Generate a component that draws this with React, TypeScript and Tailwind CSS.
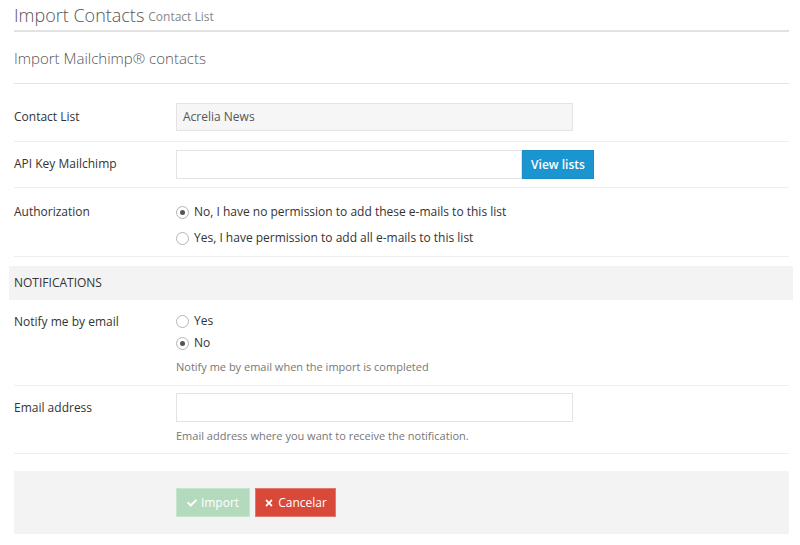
import React from "react";
import { FaCheck, FaTimes } from "react-icons/fa";

function Radio({ checked, label }: { checked?: boolean; label: string }) {
  return (
    <label className="flex h-[18px] items-center gap-[5px] leading-[18px]">
      <span className="flex h-[13px] w-[13px] items-center justify-center rounded-full border border-[#b5b5b5] bg-white">
        {checked && <span className="h-[5px] w-[5px] rounded-full bg-[#555]" />}
      </span>
      <span>{label}</span>
    </label>
  );
}

export default function App() {
  return (
    <div
      className="min-h-[545px] w-[800px] bg-white pl-[14px] pr-[11px] text-[12px] text-[#333]"
      style={{ fontFamily: '"Open Sans", "Liberation Sans", sans-serif' }}
    >
      <div className="flex h-[32px] items-end gap-[4px] border-b-2 border-[#e2e2e2] pb-[3px]">
        <span className="text-[18px] font-light leading-[24px] text-[#555]">Import Contacts</span>
        <span className="pb-[2px] text-[12px] leading-[16px] text-[#888]">Contact List</span>
      </div>
      <div className="flex h-[52px] items-center border-b border-[#e5e5e5] pt-[2px] text-[15px] font-light text-[#555]">
        Import Mailchimp® contacts
      </div>

      <div className="pt-[10px]">
        <div className="flex border-b border-[#eee] pb-[10px] pt-[9px]">
          <div className="w-[162px] pt-[5px] leading-[18px]">Contact List</div>
          <div className="flex h-[28px] w-[397px] items-center border border-[#e3e3e3] bg-[#f6f6f6] px-[6px] text-[#555]">
            Acrelia News
          </div>
        </div>

        <div className="flex border-b border-[#eee] pb-[8px] pt-[8px]">
          <div className="w-[162px] pt-[5px] leading-[18px]">API Key Mailchimp</div>
          <div className="flex">
            <div className="h-[29px] w-[346px] border border-[#e3e3e3] bg-white" />
            <button className="h-[29px] w-[72px] border border-[#1a8fc7] bg-[#1b95d0] text-[12px] font-semibold text-white">
              View lists
            </button>
          </div>
        </div>

        <div className="flex border-b border-[#eee] pb-[9px] pt-[8px]">
          <div className="w-[162px] pt-[7px] leading-[18px]">Authorization</div>
          <div className="flex flex-col gap-[8px] pt-[7px]">
            <Radio checked label="No, I have no permission to add these e-mails to this list" />
            <Radio label="Yes, I have permission to add all e-mails to this list" />
          </div>
        </div>
      </div>

      <div className="ml-[-5px] mr-[-4px] mt-[9px] flex h-[34px] items-center bg-[#f3f3f3] pl-[5px] text-[12px] uppercase">
        Notifications
      </div>

      <div className="flex border-b border-[#eee] pb-[10px] pt-[6px]">
        <div className="w-[162px] pt-[7px] leading-[18px]">Notify me by email</div>
        <div className="flex flex-col pt-[6px]">
          <div className="flex flex-col gap-[4px]">
            <Radio label="Yes" />
            <Radio checked label="No" />
          </div>
          <div className="pt-[7px] text-[11px] leading-[16px] text-[#777]">
            Notify me by email when the import is completed
          </div>
        </div>
      </div>

      <div className="flex border-b border-[#eee] pb-[9px] pt-[7px]">
        <div className="w-[162px] pt-[6px] leading-[18px]">Email address</div>
        <div className="flex flex-col">
          <div className="h-[29px] w-[397px] border border-[#e3e3e3] bg-white" />
          <div className="pt-[6px] text-[11px] leading-[16px] text-[#777]">
            Email address where you want to receive the notification.
          </div>
        </div>
      </div>

      <div className="mt-[17px] flex h-[63px] items-start gap-[5px] bg-[#f3f3f3] pl-[162px] pt-[17px]">
        <button className="flex h-[29px] w-[74px] items-center justify-center gap-[4px] border border-[#c6e4ce] bg-[#b4dabe] text-[12px] text-white">
          <FaCheck className="h-[10px] w-[10px]" />
          Import
        </button>
        <button className="flex h-[29px] w-[81px] items-center justify-center gap-[4px] border border-[#e07a6c] bg-[#d9493a] text-[12px] text-white">
          <FaTimes className="h-[10px] w-[10px]" />
          Cancelar
        </button>
      </div>
    </div>
  );
}
